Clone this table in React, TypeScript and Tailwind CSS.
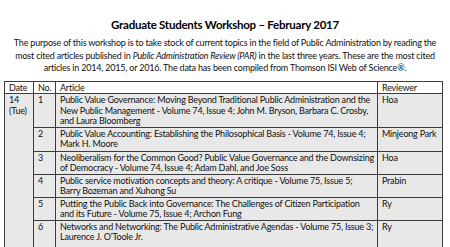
import React from 'react';

type Row = {
  no: string;
  lines: string[];
  reviewer: string;
  h: string;
};

const ROWS: Row[] = [
  {
    no: '1',
    lines: [
      'Public Value Governance: Moving Beyond Traditional Public Administration and the',
      'New Public Management - Volume 74, Issue 4; John M. Bryson, Barbara C. Crosby,',
      'and Laura Bloomberg',
    ],
    reviewer: 'Hoa',
    h: 'h-[32px]',
  },
  {
    no: '2',
    lines: [
      'Public Value Accounting: Establishing the Philosophical Basis - Volume 74, Issue 4;',
      'Mark H. Moore',
    ],
    reviewer: 'Minjeong Park',
    h: 'h-[24px]',
  },
  {
    no: '3',
    lines: [
      'Neoliberalism for the Common Good? Public Value Governance and the Downsizing',
      'of Democracy - Volume 74, Issue 4; Adam Dahl, and Joe Soss',
    ],
    reviewer: 'Hoa',
    h: 'h-[23px]',
  },
  {
    no: '4',
    lines: [
      'Public service motivation concepts and theory: A critique - Volume 75, Issue 5;',
      'Barry Bozeman and Xuhong Su',
    ],
    reviewer: 'Prabin',
    h: 'h-[21px]',
  },
  {
    no: '5',
    lines: [
      'Putting the Public Back into Governance: The Challenges of Citizen Participation',
      'and its Future - Volume 75, Issue 4; Archon Fung',
    ],
    reviewer: 'Ry',
    h: 'h-[20px]',
  },
  {
    no: '6',
    lines: [
      'Networks and Networking: The Public Administrative Agendas - Volume 75, Issue 3;',
      'Laurence J. O\u2019Toole Jr.',
    ],
    reviewer: 'Ry',
    h: 'h-[31px]',
  },
];

const cell = 'border border-[#3c3c3c] align-top pl-[4px] pt-[1px] overflow-hidden';

export default function App() {
  return (
    <div className="w-[450px] h-[247px] bg-white overflow-hidden text-[#111] font-['Lato','Open_Sans',sans-serif]">
      <h1 className="pt-[18px] text-center text-[11.5px] leading-[14px] tracking-[-0.25px] font-bold text-black">
        Graduate Students Workshop – February 2017
      </h1>
      <div className="mt-[5px] text-center text-[9px] leading-[12.5px] tracking-[-0.2px] whitespace-nowrap">
        <p>
          The purpose of this workshop is to take stock of current topics in the field of Public Administration by reading the
        </p>
        <p>
          most cited articles published in <i>Public Administration Review (PAR)</i> in the last three years. These are the most cited
        </p>
        <p>articles in 2014, 2015, or 2016. The data has been compiled from Thomson ISI Web of Science®.</p>
      </div>
      <table className="ml-[4px] mt-[6px] w-[438px] border-collapse table-fixed text-[9px] leading-[10.5px] tracking-[-0.2px]">
        <colgroup>
          <col className="w-[29px]" />
          <col className="w-[22px]" />
          <col className="w-[322px]" />
          <col className="w-[65px]" />
        </colgroup>
        <thead>
          <tr className="h-[12px] bg-white">
            <th className={`${cell} font-normal text-left`}>Date</th>
            <th className={`${cell} font-normal text-left`}>No.</th>
            <th className={`${cell} font-normal text-left`}>Article</th>
            <th className={`${cell} font-normal text-left`}>Reviewer</th>
          </tr>
        </thead>
        <tbody className="bg-[#e8e8e8]">
          {ROWS.map((r, i) => (
            <tr key={r.no} className={r.h}>
              {i === 0 && (
                <td rowSpan={ROWS.length} className={cell}>
                  14
                  <br />
                  (Tue)
                </td>
              )}
              <td className={cell}>{r.no}</td>
              <td className={`${cell} whitespace-nowrap`}>
                {r.lines.map((l) => (
                  <div key={l}>{l}</div>
                ))}
              </td>
              <td className={`${cell} whitespace-nowrap`}>{r.reviewer}</td>
            </tr>
          ))}
        </tbody>
      </table>
    </div>
  );
}
